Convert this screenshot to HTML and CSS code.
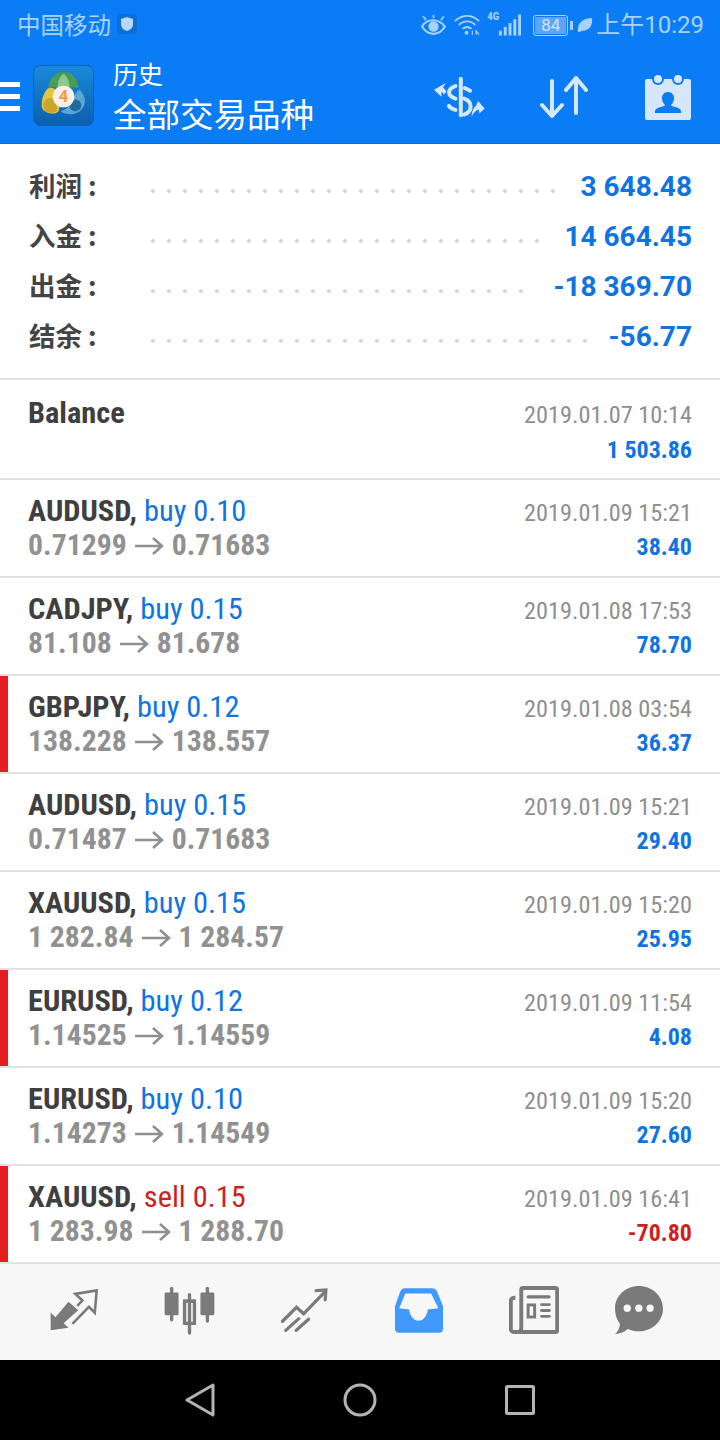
FILE: index.html
```html
<!DOCTYPE html>
<html lang="zh">
<head>
<meta charset="utf-8">
<title>历史</title>
<link rel="stylesheet" href="styles.css">
</head>
<body>
<svg class="defs" width="0" height="0">
  <symbol id="arr" viewBox="0 0 29 20"><path d="M0 10h27M18 2l9 8-9 8" fill="none" stroke="#8f8f8f" stroke-width="2.600"/></symbol>
</svg>
<div class="phone">
<header class="top">
  <div class="status">
    <div class="status-left"><span>中国移动</span>
      <svg class="shield" width="20" height="20" viewBox="0 0 20 20"><rect width="20" height="20" rx="4" fill="#0f6ed6"/><path d="M10 3l6 2v5c0 4-3 6-6 7-3-1-6-3-6-7V5z" fill="#b7d7fb"/></svg>
    </div>
    <div class="status-right">
      <svg class="ic-eye" width="25" height="22" viewBox="2 0 24 21" fill="none" stroke="#a9d2fd" stroke-width="2"><path d="M3 12c3-5 7-6 10.500-6S21 7 25 12c-3 5-7 7-11 7s-8-2-11-7z"/><circle cx="14" cy="12" r="4" fill="#a9d2fd"/><path d="M4 2l3 4M24 2l-3 4M14 1v3" stroke-width="1.600"/></svg>
      <svg class="ic-wifi" width="27" height="24" viewBox="0 0 28 24" fill="none" stroke="#a9d2fd" stroke-width="2"><path d="M1 8c8-7 17-7 25 0M5 12c5-5 12-5 17 0M9 16c3-2.500 6-2.500 9 0"/><circle cx="13" cy="20" r="2" fill="#a9d2fd" stroke="none"/><path d="M19 22v-4M23 22v-4l3 4" stroke-width="1.200"/></svg>
      <span class="net">
        <span class="net-label">4G</span>
        <svg width="23" height="24" viewBox="0 0 24 24" fill="#a9d2fd"><rect x="0" y="18" width="3" height="5"/><rect x="5" y="14" width="3" height="9"/><rect x="10" y="10" width="3" height="13"/><rect x="15" y="6" width="3" height="17"/><rect x="20" y="1" width="3" height="22"/></svg>
      </span>
      <span class="battery"><span class="battery-level">84</span></span><span class="battery-tip"></span>
      <svg class="ic-leaf" width="16" height="18" viewBox="0 0 16 18"><path d="M1 16C0 7 6 2 15 2c1 8-3 13-11 13l5-6-6 7z" fill="#a9d2fd"/></svg>
      <span class="clock">上午10:29</span>
    </div>
  </div>
  <div class="bar">
    <div class="burger"><i></i><i></i><i></i></div>
    <svg class="logo" width="61" height="61" viewBox="0 0 62 62">
      <defs><linearGradient id="lg" x1="0" y1="0" x2="0" y2="1"><stop offset="0" stop-color="#1a8ad8"/><stop offset="1" stop-color="#0c5fb0"/></linearGradient></defs>
      <rect x="0.500" y="0.500" width="61" height="61" rx="7" fill="url(#lg)" stroke="#0a62bd"/>
      <path d="M31 7c6 0 10 3 13 8 2 3 2 7 2 9-3-2-5-2-8-1l-7 2-7-2c-3-1-6-1-8 1 0-2 0-6 2-9 3-5 7-8 13-8z" fill="#4b9a55"/>
      <path d="M31 9c-4 3-6 8-6 14h12c0-6-2-11-6-14z" fill="#8cc98a"/>
      <path d="M15 24c4-2 8 0 10 5 2 6 3 12 1 18-2 2-5 3-9 2-5-1-9-4-8-9 0-6 2-12 6-16z" fill="#e3c63f"/>
      <path d="M12 36c3-3 7-3 10-1 2 3 3 8 2 12-3 2-8 2-11 0-3-3-3-8-1-11z" fill="#c9a52c"/>
      <path d="M47 25c5 4 7 11 5 16-2 6-8 9-13 9-5 0-9-1-11-3 6-2 9-5 11-9 2-5 4-10 8-13z" fill="#5aa6d6"/>
      <circle cx="43" cy="41" r="6" fill="#1d6a9e"/>
      <circle cx="31" cy="32" r="11" fill="#f8efe6"/>
      <text x="31" y="38" class="logo-num">4</text>
    </svg>
    <div class="titles">
      <div class="title-small">历史</div>
      <div class="title-big">全部交易品种</div>
    </div>
    <div class="actions">
      <svg width="53" height="42" viewBox="102 222 160 126" fill="none" stroke="#d6e7fb" stroke-width="12" stroke-linecap="round"><path d="M186 230v110"/><path d="M170 252c-26 8-26 30 0 38"/><path d="M198 258l16 8"/><path d="M196 290c26 8 26 40 0 48"/><path d="M150 312c4 6 10 10 20 12"/><path d="M105 263L140 243 132 258c6 2 8 6 10 12l-8 8c-1-4-2-6-6-8l-1 14z" fill="#d6e7fb" stroke="none"/><path d="M258 320L238 297 232 312c-8 4-12 16-14 33 6-12 14-20 22-22l2 12z" fill="#d6e7fb" stroke="none"/></svg>
      <svg width="48" height="42" viewBox="0 0 48 42" fill="none" stroke="#d6e7fb" stroke-width="4" stroke-linecap="round" stroke-linejoin="round"><path d="M12 5v35M2 29l10 11 10-11M36 37V2M26 14L36 2l10 12"/></svg>
      <svg class="cal" width="46" height="46" viewBox="0 0 46 46"><rect y="5" width="46" height="41" rx="2" fill="#d6e7fb"/><circle cx="13" cy="5" r="6" fill="#0a7cf5"/><circle cx="33" cy="5" r="6" fill="#0a7cf5"/><circle cx="13" cy="5" r="4" fill="#d6e7fb"/><circle cx="33" cy="5" r="4" fill="#d6e7fb"/><path d="M23 18c4 0 6 3 6 6 0 3-1 5-3 7 0 2 10 2 10 6v2H10v-2c0-4 10-4 10-6-2-2-3-4-3-7 0-3 2-6 6-6z" fill="#0a7cf5"/></svg>
    </div>
  </div>
</header>

<section class="summary">
  <div class="sum-row"><span class="sum-label">利润 :</span><span class="dots"></span><span class="sum-value"><b>3 648.48</b></span></div>
  <div class="sum-row"><span class="sum-label">入金 :</span><span class="dots"></span><span class="sum-value"><b>14 664.45</b></span></div>
  <div class="sum-row"><span class="sum-label">出金 :</span><span class="dots"></span><span class="sum-value"><b>-18 369.70</b></span></div>
  <div class="sum-row"><span class="sum-label">结余 :</span><span class="dots"></span><span class="sum-value"><b>-56.77</b></span></div>
</section>

<main class="list">
  <article class="deal balance-row">
    <div class="left"><div class="l1"><span class="sym">Balance</span></div></div>
    <div class="right"><div class="date">2019.01.07 10:14</div><div class="pl">1 503.86</div></div>
  </article>
  <article class="deal">
    <div class="left"><div class="l1"><span class="sym">AUDUSD,</span> <span class="dir">buy 0.10</span></div><div class="l2">0.71299<svg class="arrow"><use href="#arr"/></svg>0.71683</div></div>
    <div class="right"><div class="date">2019.01.09 15:21</div><div class="pl">38.40</div></div>
  </article>
  <article class="deal">
    <div class="left"><div class="l1"><span class="sym">CADJPY,</span> <span class="dir">buy 0.15</span></div><div class="l2">81.108<svg class="arrow"><use href="#arr"/></svg>81.678</div></div>
    <div class="right"><div class="date">2019.01.08 17:53</div><div class="pl">78.70</div></div>
  </article>
  <article class="deal flagged">
    <div class="left"><div class="l1"><span class="sym">GBPJPY,</span> <span class="dir">buy 0.12</span></div><div class="l2">138.228<svg class="arrow"><use href="#arr"/></svg>138.557</div></div>
    <div class="right"><div class="date">2019.01.08 03:54</div><div class="pl">36.37</div></div>
  </article>
  <article class="deal">
    <div class="left"><div class="l1"><span class="sym">AUDUSD,</span> <span class="dir">buy 0.15</span></div><div class="l2">0.71487<svg class="arrow"><use href="#arr"/></svg>0.71683</div></div>
    <div class="right"><div class="date">2019.01.09 15:21</div><div class="pl">29.40</div></div>
  </article>
  <article class="deal">
    <div class="left"><div class="l1"><span class="sym">XAUUSD,</span> <span class="dir">buy 0.15</span></div><div class="l2">1 282.84<svg class="arrow"><use href="#arr"/></svg>1 284.57</div></div>
    <div class="right"><div class="date">2019.01.09 15:20</div><div class="pl">25.95</div></div>
  </article>
  <article class="deal flagged">
    <div class="left"><div class="l1"><span class="sym">EURUSD,</span> <span class="dir">buy 0.12</span></div><div class="l2">1.14525<svg class="arrow"><use href="#arr"/></svg>1.14559</div></div>
    <div class="right"><div class="date">2019.01.09 11:54</div><div class="pl">4.08</div></div>
  </article>
  <article class="deal">
    <div class="left"><div class="l1"><span class="sym">EURUSD,</span> <span class="dir">buy 0.10</span></div><div class="l2">1.14273<svg class="arrow"><use href="#arr"/></svg>1.14549</div></div>
    <div class="right"><div class="date">2019.01.09 15:20</div><div class="pl">27.60</div></div>
  </article>
  <article class="deal flagged">
    <div class="left"><div class="l1"><span class="sym">XAUUSD,</span> <span class="dir sell">sell 0.15</span></div><div class="l2">1 283.98<svg class="arrow"><use href="#arr"/></svg>1 288.70</div></div>
    <div class="right"><div class="date">2019.01.09 16:41</div><div class="pl loss">-70.80</div></div>
  </article>
</main>

<nav class="tabs">
  <svg width="48" height="42" viewBox="148 73 148 129"><path d="M150 145V200L205 192 190 178 235 138 205 112 165 160Z" fill="#7a7a7a"/><path d="M232 125L248 108 226 88 292 77 286 146 268 128 217 180" fill="none" stroke="#7a7a7a" stroke-width="8"/></svg>
  <svg width="51" height="49" viewBox="490 62 154 148" fill="#7a7a7a"><rect x="508" y="64" width="10" height="105" rx="5"/><rect x="492" y="82" width="42" height="68" rx="4"/><rect x="562" y="83" width="10" height="126" rx="5"/><path fill-rule="evenodd" d="M551 102h32a4 4 0 014 4v70a4 4 0 01-4 4h-32a4 4 0 01-4-4v-70a4 4 0 014-4zM557 113v57h20v-57z"/><rect x="616" y="64" width="10" height="109" rx="5"/><rect x="600" y="82" width="42" height="68" rx="4"/></svg>
  <svg width="48" height="45" viewBox="838 66 146 138" fill="none" stroke="#7a7a7a" stroke-width="10" stroke-linecap="round"><path d="M845 168L888 125 910 145 975 78"/><path d="M948 74L978 72 976 102" stroke-linejoin="miter"/><path d="M855 196L895 160M887 196L925 162"/></svg>
  <svg width="48" height="45" viewBox="105 68 145 134"><path d="M135 68h80c10 0 15 5 18 12l17 42v68c0 8-4 12-12 12H117c-8 0-12-4-12-12v-68l15-42c3-7 8-12 15-12z" fill="#4099ff"/><path d="M136 84h78l22 44-32 4c-2 20-14 34-28 34s-26-14-28-34l-30-4z" fill="#f7f7f7"/></svg>
  <svg width="50" height="48" viewBox="447 62 152 147" fill="none" stroke="#7a7a7a" stroke-width="12"><path d="M466 98c-9 0-14 4-14 10v86c0 5 4 9 9 9h128c3 0 5-2 5-5V73c0-3-2-5-5-5h-100c-3 0-5 2-5 5v118c0 8-4 12-9 12"/><path d="M505 95h64" stroke-linecap="round" stroke-width="10"/><rect x="505" y="120" width="20" height="37" stroke-width="9"/><path d="M546 119h24M546 137h24M546 155h24" stroke-linecap="round" stroke-width="9"/></svg>
  <svg width="48" height="48" viewBox="765 63 145 145"><path d="M837 63c40 0 73 30 73 68 0 39-33 69-73 69-12 0-23-3-33-7-10 9-24 15-39 15 9-7 14-17 15-30-10-13-15-30-15-47 0-38 32-68 72-68z" fill="#7a7a7a"/><circle cx="802" cy="130" r="11" fill="#f7f7f7"/><circle cx="837" cy="130" r="11" fill="#f7f7f7"/><circle cx="871" cy="130" r="11" fill="#f7f7f7"/></svg>
</nav>

<footer class="sysnav">
  <svg width="30" height="34" viewBox="0 0 30 34" fill="none" stroke="#b4b4b4" stroke-width="3" stroke-linejoin="round"><path d="M28 2v30L2 17z"/></svg>
  <svg width="34" height="34" viewBox="0 0 34 34" fill="none" stroke="#b4b4b4" stroke-width="3"><circle cx="17" cy="17" r="15"/></svg>
  <svg width="30" height="30" viewBox="0 0 30 30" fill="none" stroke="#b4b4b4" stroke-width="3" stroke-linejoin="round"><rect x="1.500" y="1.500" width="27" height="27" rx="1"/></svg>
</footer>
</div>
</body>
</html>
```
FILE: styles.css
```css
* { box-sizing: border-box; }
html, body { margin: 0; padding: 0; }
body { background: #fff; font-family: Roboto, "Noto Sans CJK SC", sans-serif; }
.defs { position: absolute; }
.phone { width: 720px; height: 1440px; display: flex; flex-direction: column; overflow: hidden; }

.top { height: 144px; background: #0a7cf5; flex: none; display: flex; flex-direction: column; border-bottom: 1px solid #0a6fdc; }
.status { height: 50px; display: flex; justify-content: space-between; align-items: center; padding: 0 16px 0 17px; color: #a9d2fd; font-size: 24px; }
.status-left { display: flex; align-items: center; gap: 6px; font-family: "Noto Sans CJK SC", sans-serif; font-size: 23.500px; line-height: 30px; margin-top: -3px; }
.status-right { display: flex; align-items: center; }
.ic-wifi { margin-left: 8px; }
.net { position: relative; display: flex; margin-left: 6px; padding-left: 12px; }
.net-label { position: absolute; left: 0; top: -3px; font-size: 11px; font-weight: 700; font-stretch: condensed; }
.battery { width: 35px; height: 21px; border: 1.500px solid #a9d2fd; border-radius: 3px; margin-left: 11px; padding: 1px; display: flex; }
.battery-level { flex: 1; background: #5ea5f6; font-size: 17px; line-height: 16px; text-align: center; color: #cfe4fc; }
.battery-tip { width: 3px; height: 9px; background: #a9d2fd; margin-left: 2px; }
.ic-leaf { margin-left: 4px; }
.clock { font-size: 24px; line-height: 30px; margin-left: 3px; }

.bar { flex: 1; display: flex; align-items: center; }
.burger { width: 20px; display: flex; flex-direction: column; gap: 6.500px; }
.burger i { display: block; height: 5.500px; background: #fff; }
.logo { margin-left: 13px; flex: none; margin-bottom: 2px; }
.logo-num { font: 700 17px Roboto, sans-serif; fill: #ee9a4a; text-anchor: middle; }
.titles { margin-left: 19px; color: #fff; font-family: "Noto Sans CJK SC", sans-serif; }
.title-small { font-size: 25px; line-height: 32px; }
.title-big { font-size: 33.500px; line-height: 48px; }
.actions { margin-left: auto; padding-right: 29px; display: flex; gap: 54px; align-items: center; }
.cal { margin-left: 3px; }

.summary { height: 236px; flex: none; padding-top: 17px; border-bottom: 2px solid #e2e2e2; }
.sum-row { height: 50px; display: flex; align-items: center; padding: 0 28px 0 29px; }
.sum-label { width: 116px; flex: none; font: 700 26.500px "Noto Sans CJK SC", sans-serif; color: #444; margin-bottom: 4px; white-space: nowrap; }
.dots { flex: 1; height: 4px; margin-top: 10px; background-image: radial-gradient(circle, #d9d9d9 2px, transparent 2.200px); background-size: 16px 4px; background-repeat: repeat-x; }
.sum-value { font-size: 28px; color: #0f74e0; margin-left: 22px; }
.sum-value b { font-weight: 700; }

.list { flex: 1; display: flex; flex-direction: column; }
.deal { height: 98px; flex: none; padding: 0 28px; border-bottom: 2px solid #e2e2e2; display: flex; justify-content: space-between; position: relative; }
.balance-row { height: 100px; }
.left { padding-top: 14px; }
.right { padding-top: 16px; text-align: right; }
.balance-row .left { padding-top: 16px; }
.balance-row .right { padding-top: 18px; }
.balance-row .pl { margin-top: 1px; }
.flagged::before { content: ""; position: absolute; left: 0; top: 0; bottom: 0; width: 8px; background: #e51c20; }
.l1 { font-size: 30.400px; line-height: 34px; font-stretch: condensed; white-space: nowrap; }
.sym { font-weight: 700; color: #3f3f3f; display: inline-block; }
.dir { color: #0f74e0; display: inline-block; }
.sell { color: #cf1f1f; }
.l2 { font-size: 29.700px; line-height: 34px; font-weight: 700; color: #919191; font-stretch: condensed; white-space: nowrap; }
.arrow { width: 29px; height: 20px; margin: 0 8px; vertical-align: -1px; }
.date { font-size: 24.300px; line-height: 34px; color: #8f8f8f; font-stretch: condensed; }
.pl { font-size: 24px; line-height: 34px; font-weight: 700; color: #0f74e0; font-stretch: condensed; }
.loss { color: #cf1f1f; }

.tabs { height: 96px; flex: none; background: #f7f7f7; display: grid; grid-template-columns: repeat(5, 115px) 95px; justify-items: center; align-items: center; padding: 0 0 4px 16.500px; }
.sysnav { height: 80px; flex: none; background: #000; display: flex; align-items: center; justify-content: space-between; padding: 0 185px; }
```
